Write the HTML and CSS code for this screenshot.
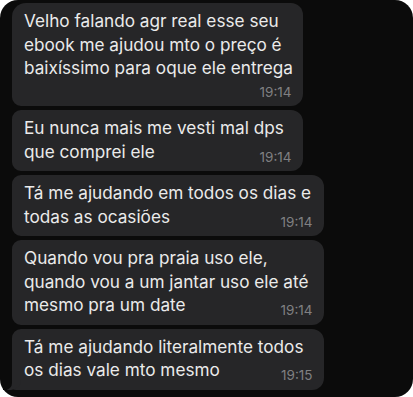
FILE: index.html
```html
<!DOCTYPE html>
<html lang="pt-BR">
<head>
<meta charset="utf-8">
<title>Chat</title>
<link rel="stylesheet" href="styles.css">
</head>
<body>
<div class="chat">
  <div class="bubble first narrow">
    <p class="msg">Velho falando agr real esse seu<br>ebook me ajudou mto o preço é<br>baixíssimo para oque ele entrega</p>
    <div class="time-row"></div>
    <span class="time">19:14</span>
  </div>
  <div class="bubble narrow">
    <p class="msg">Eu nunca mais me vesti mal dps<br>que comprei ele</p>
    <span class="time">19:14</span>
  </div>
  <div class="bubble wide">
    <p class="msg">Tá me ajudando em todos os dias e<br>todas as ocasiões</p>
    <span class="time">19:14</span>
  </div>
  <div class="bubble wide">
    <p class="msg">Quando vou pra praia uso ele,<br>quando vou a um jantar uso ele até<br>mesmo pra um date</p>
    <span class="time">19:14</span>
  </div>
  <div class="bubble wide last">
    <p class="msg">Tá me ajudando literalmente todos<br>os dias vale mto mesmo</p>
    <span class="time">19:15</span>
  </div>
</div>
</body>
</html>
```
FILE: styles.css
```css
* {
  box-sizing: border-box;
  margin: 0;
  padding: 0;
}

html, body {
  background: #ffffff;
  width: 413px;
  height: 397px;
  overflow: hidden;
}

.chat {
  width: 413px;
  height: 397px;
  background: #0b0b0b;
  border-radius: 18px;
  padding: 3px 0 0 12px;
  display: flex;
  flex-direction: column;
  align-items: flex-start;
  gap: 4px;
  font-family: Inter, "Noto Sans", "Liberation Sans", sans-serif;
}

.bubble {
  position: relative;
  background: #262628;
  border-radius: 9px 12px 12px 9px;
  padding: 6px 12px 8px 12px;
  color: #ebebeb;
  font-size: 17.2px;
  line-height: 23.5px;
}

.bubble.first {
  border-top-left-radius: 14px;
}

.narrow {
  width: 291px;
}

.wide {
  width: 312px;
}

.msg {
  white-space: nowrap;
}

.time-row {
  height: 18.5px;
}

.time {
  position: absolute;
  right: 11.5px;
  bottom: 7px;
  font-size: 13.5px;
  line-height: 13.5px;
  color: #808082;
}

.bubble.last {
  border-bottom-left-radius: 4px;
}

.bubble.last::before {
  content: "";
  position: absolute;
  left: -5px;
  bottom: 0;
  width: 14px;
  height: 12px;
  background: #262628;
  border-bottom-right-radius: 10px;
}

.bubble.last::after {
  content: "";
  position: absolute;
  left: -9px;
  bottom: 0;
  width: 9px;
  height: 12px;
  background: #0b0b0b;
  border-bottom-right-radius: 7px;
}
```
